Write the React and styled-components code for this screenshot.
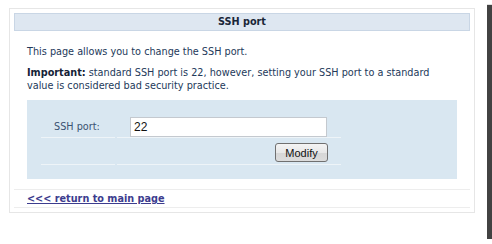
import styled, { createGlobalStyle } from 'styled-components';

const Global = createGlobalStyle`
  html, body {
    margin: 0;
    padding: 0;
    background: #ffffff;
  }
  body {
    font-family: "DejaVu Sans", Verdana, sans-serif;
  }
`

const Frame = styled.div`
  width: 487px;
  height: 239px;
  background: #ffffff;
  box-shadow: 5px 5px 1px rgba(45, 45, 45, 0.9);
  padding: 8px 0 0 9px;
  box-sizing: border-box;
`

const Box = styled.div`
  width: 466px;
  border: 1px solid #e6e6e6;
  padding: 4px;
  box-sizing: border-box;
`

const Header = styled.div`
  height: 16px;
  line-height: 16px;
  border: 1px solid #c9d6e5;
  background: #dee7f1;
  text-align: center;
  font-size: 9.7px;
  font-weight: bold;
  color: #1a2638;
`

const Content = styled.div`
  padding: 0 13px;
  font-size: 9.7px;
  line-height: 13px;
  color: #23395a;
`

const Para = styled.p`
  margin: ${p => p.$top}px 0 0 0;
`

const Strong = styled.b`
  color: #142236;
`

const Panel = styled.div`
  margin-top: 8px;
  background: #d9e7f1;
  padding: 15px 14px 14px 14px;
`

const Row = styled.div`
  display: grid;
  grid-template-columns: 74px 224px;
  column-gap: 2px;
`

const Cell = styled.div`
  height: ${p => p.$h}px;
  border-bottom: 1px solid #eef4f8;
  padding: ${p => p.$pt}px 13px 0 13px;
  box-sizing: border-box;
  display: flex;
  align-items: ${p => (p.$center ? 'center' : 'flex-start')};
  justify-content: ${p => (p.$right ? 'flex-end' : 'flex-start')};
`

const Label = styled.span`
  color: #3a5272;
  font-size: 9.7px;
`

const Input = styled.input`
  width: 197px;
  height: 20px;
  box-sizing: border-box;
  border: 1px solid #c4c9cf;
  background: #ffffff;
  font-family: "Liberation Sans", Arial, sans-serif;
  font-size: 12px;
  color: #111;
  padding: 0 3px;
  margin: 0;
  outline: none;
`

const Button = styled.button`
  width: 53px;
  height: 19px;
  box-sizing: border-box;
  border: 1px solid #707070;
  border-radius: 3px;
  background: linear-gradient(#f4f4f4 0%, #e8e8e8 50%, #d6d6d6 51%, #dcdcdc 100%);
  font-family: "Liberation Sans", Arial, sans-serif;
  font-size: 11px;
  color: #111;
  padding: 0;
  margin: 0;
`

const Footer = styled.div`
  margin-top: 10px;
  height: 17px;
  border-top: 1px solid #ededed;
  border-bottom: 1px solid #ededed;
  padding-left: 13px;
  display: flex;
  align-items: center;
`

const Link = styled.a`
  font-size: 9.7px;
  font-weight: bold;
  color: #3c3c8e;
  text-decoration: underline;
  cursor: pointer;
`

export default function App() {
  return (
    <>
      <Global />
      <Frame>
        <Box>
          <Header>SSH port</Header>
          <Content>
            <Para $top={14}>This page allows you to change the SSH port.</Para>
            <Para $top={8}>
              <Strong>Important:</Strong> standard SSH port is 22, however, setting your SSH port to a standard
              <br />
              value is considered bad security practice.
            </Para>
            <Panel>
              <Row>
                <Cell $h={23} $pt={0} $center>
                  <Label>SSH port:</Label>
                </Cell>
                <Cell $h={23} $pt={2}>
                  <Input defaultValue="22" />
                </Cell>
              </Row>
              <Row>
                <Cell $h={27} $pt={0} />
                <Cell $h={27} $pt={5} $right>
                  <Button>Modify</Button>
                </Cell>
              </Row>
            </Panel>
          </Content>
          <Footer>
            <Link>&lt;&lt;&lt; return to main page</Link>
          </Footer>
        </Box>
      </Frame>
    </>
  );
}
